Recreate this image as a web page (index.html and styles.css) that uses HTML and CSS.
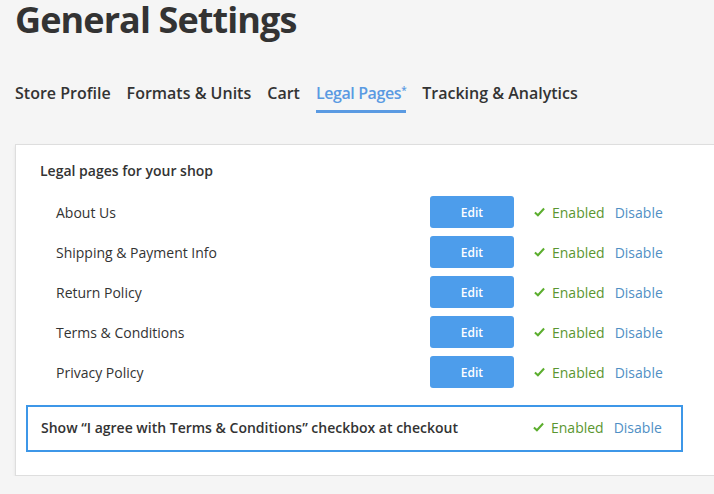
FILE: index.html
```html
<!DOCTYPE html>
<html lang="en">
<head>
<meta charset="utf-8">
<title>General Settings</title>
<link rel="stylesheet" href="styles.css">
</head>
<body>
<div class="page">
  <h1 class="title">General Settings</h1>
  <nav class="tabs">
    <a class="tab">Store Profile</a>
    <a class="tab">Formats &amp; Units</a>
    <a class="tab">Cart</a>
    <a class="tab active">Legal Pages<span class="star">*</span></a>
    <a class="tab">Tracking &amp; Analytics</a>
  </nav>
  <section class="panel">
    <h2 class="panel-title">Legal pages for your shop</h2>
    <div class="rows">
      <div class="row"><span class="name">About Us</span><button class="edit">Edit</button><span class="status"><svg class="check" viewBox="0 0 12 10"><path d="M1 5.5 L4.3 8.6 L11 1.2" /></svg><span class="enabled">Enabled</span><a class="disable">Disable</a></span></div>
      <div class="row"><span class="name">Shipping &amp; Payment Info</span><button class="edit">Edit</button><span class="status"><svg class="check" viewBox="0 0 12 10"><path d="M1 5.5 L4.3 8.6 L11 1.2" /></svg><span class="enabled">Enabled</span><a class="disable">Disable</a></span></div>
      <div class="row"><span class="name">Return Policy</span><button class="edit">Edit</button><span class="status"><svg class="check" viewBox="0 0 12 10"><path d="M1 5.5 L4.3 8.6 L11 1.2" /></svg><span class="enabled">Enabled</span><a class="disable">Disable</a></span></div>
      <div class="row"><span class="name">Terms &amp; Conditions</span><button class="edit">Edit</button><span class="status"><svg class="check" viewBox="0 0 12 10"><path d="M1 5.5 L4.3 8.6 L11 1.2" /></svg><span class="enabled">Enabled</span><a class="disable">Disable</a></span></div>
      <div class="row"><span class="name">Privacy Policy</span><button class="edit">Edit</button><span class="status"><svg class="check" viewBox="0 0 12 10"><path d="M1 5.5 L4.3 8.6 L11 1.2" /></svg><span class="enabled">Enabled</span><a class="disable">Disable</a></span></div>
    </div>
    <div class="agree">
      <span class="agree-text">Show “I agree with Terms &amp; Conditions” checkbox at checkout</span>
      <span class="status"><svg class="check" viewBox="0 0 12 10"><path d="M1 5.5 L4.3 8.6 L11 1.2" /></svg><span class="enabled">Enabled</span><a class="disable">Disable</a></span>
    </div>
  </section>
</div>
</body>
</html>
```
FILE: styles.css
```css
html, body {
  margin: 0;
  padding: 0;
  background: #f5f5f5;
  overflow: hidden;
}
body {
  font-family: "Open Sans", "DejaVu Sans", sans-serif;
  color: #333;
}
.page {
  padding-left: 15px;
}
.title {
  margin: 0;
  font-size: 36px;
  line-height: 40px;
  font-weight: 700;
  color: #333;
  letter-spacing: -0.9px;
}
.tabs {
  display: flex;
  gap: 16px;
  margin-top: 42px;
}
.tab {
  font-size: 16px;
  line-height: 23px;
  height: 23px;
  font-weight: 600;
  color: #333;
  padding-bottom: 5px;
  border-bottom: 3px solid transparent;
}
.tab.active {
  color: #5a9ae2;
  border-bottom-color: #5a9ae2;
  letter-spacing: -0.4px;
}
.star {
  font-size: 10px;
  line-height: 0;
  vertical-align: 5px;
}
.panel {
  margin-top: 31px;
  background: #fff;
  border: 1px solid #dedede;
  border-right: none;
  box-shadow: 0 2px 3px rgba(0,0,0,0.08);
  padding: 16px 0 0 24px;
  height: 314px;
}
.panel-title {
  margin: 0;
  font-size: 14px;
  line-height: 20px;
  font-weight: 600;
  color: #333;
}
.rows {
  margin-top: 11px;
}
.row {
  display: grid;
  grid-template-columns: 374px 84px auto;
  align-items: center;
  height: 40px;
  padding-left: 16px;
  font-size: 14px;
}
.name {
  color: #333;
}
.edit {
  width: 84px;
  height: 32px;
  border: none;
  border-radius: 3px;
  background: #4d9deb;
  color: #fff;
  font-family: inherit;
  font-size: 12px;
  font-weight: 600;
  padding: 0;
}
.status {
  display: flex;
  align-items: center;
  font-size: 14px;
  padding-left: 20px;
}
.check {
  width: 11px;
  height: 10px;
  margin-right: 7px;
  fill: none;
  stroke: #5cae2e;
  stroke-width: 2.2;
}
.enabled {
  color: #5a9630;
}
.disable {
  color: #4f8fc5;
  margin-left: 10px;
}
.agree {
  margin-top: 13px;
  width: 640px;
  height: 40px;
  padding-bottom: 3px;
  margin-left: -14px;
  border: 2px solid #3d97e8;
  display: grid;
  grid-template-columns: 1fr 148px;
  align-items: center;
  padding-left: 13px;
  box-sizing: content-box;
  font-size: 14px;
}
.agree .status {
  padding-left: 0;
}
.agree-text {
  font-weight: 600;
  color: #333;
}
```
